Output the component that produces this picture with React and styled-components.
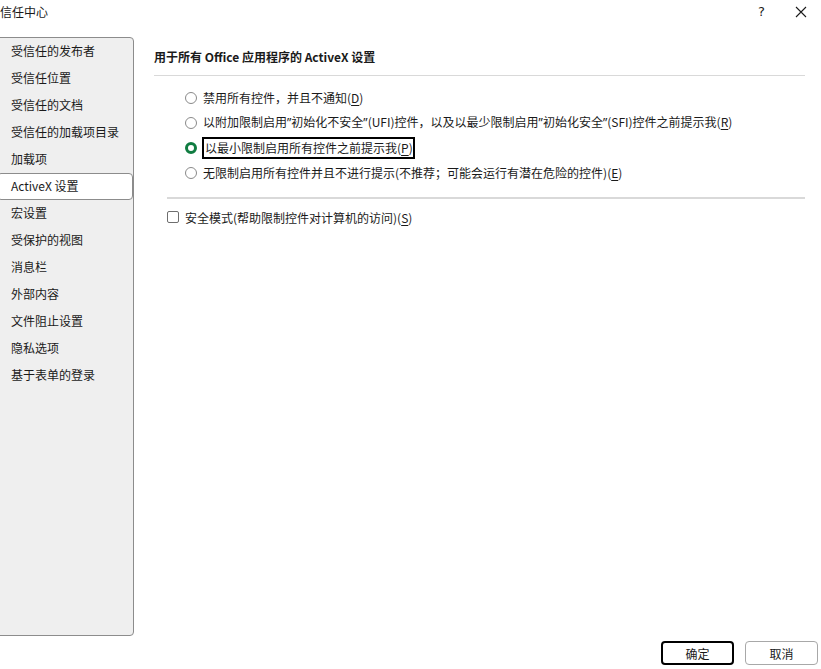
import React from 'react';
import styled, { createGlobalStyle } from 'styled-components';

const Global = createGlobalStyle`
  body {
    margin: 0;
    background: #ffffff;
    font-family: "Microsoft YaHei UI", "Noto Sans CJK SC", "Noto Sans", sans-serif;
    font-size: 12px;
    color: #1a1a1a;
  }
`;

const Dialog = styled.div`
  width: 821px;
  height: 669px;
  display: flex;
  flex-direction: column;
  overflow: hidden;
  background: #ffffff;
`;

const TitleBar = styled.div`
  height: 37px;
  display: flex;
  align-items: flex-start;
  justify-content: space-between;
`;

const Title = styled.div`
  padding: 4px 0 0 0;
  line-height: 16px;
  font-size: 12px;
`;

const TitleButtons = styled.div`
  display: flex;
  align-items: center;
  gap: 30px;
  padding: 4px 14px 0 0;
`;

const Help = styled.span`
  font-family: "Segoe UI", "DejaVu Sans", sans-serif;
  font-size: 13px;
  line-height: 16px;
`;

const Body = styled.div`
  flex: 1;
  display: flex;
  min-height: 0;
`;

const Sidebar = styled.div`
  width: 138px;
  margin-left: -4px;
  background: #efefef;
  border: 1px solid #8c8c8c;
  border-radius: 4px;
  box-sizing: border-box;
  display: flex;
  flex-direction: column;
`;

const NavItem = styled.div`
  height: 27px;
  line-height: 23px;
  padding-left: 13px;
  box-sizing: border-box;
  border: 1px solid ${p => (p.active ? '#8c8c8c' : 'transparent')};
  border-radius: 4px;
  background: ${p => (p.active ? '#ffffff' : 'transparent')};
  white-space: nowrap;
`;

const Main = styled.div`
  flex: 1;
  padding: 12px 16px 0 20px;
  display: flex;
  flex-direction: column;
`;

const Heading = styled.div`
  font-weight: bold;
  line-height: 16px;
  padding-bottom: 10px;
  border-bottom: 1px solid #d9d9d9;
`;

const RadioGroup = styled.div`
  display: flex;
  flex-direction: column;
  padding: 9px 0 12px 31px;
`;

const Option = styled.label`
  display: flex;
  align-items: center;
  height: 25px;
  white-space: nowrap;
`;

const RadioDot = styled.span`
  width: 12px;
  height: 12px;
  box-sizing: border-box;
  border-radius: 50%;
  border: ${p => (p.checked ? '3px solid #107c41' : '1px solid #8a8a8a')};
  background: #ffffff;
  margin-right: ${p => (p.checked ? '5px' : '6px')};
  flex-shrink: 0;
`;

const OptionText = styled.span`
  line-height: 16px;
  padding: ${p => (p.focused ? '1px 2px 1px 1px' : '0')};
  border: ${p => (p.focused ? '2px solid #000000' : 'none')};
  width: ${p => (p.focused ? '206px' : 'auto')};
`;

const Quote = styled.span`
  font-family: "Noto Sans", "DejaVu Sans", sans-serif;
`;

const Key = styled.u`
  text-underline-offset: 2px;
`;

const Divider = styled.div`
  margin-left: 13px;
  border-top: 2px solid #d9d9d9;
`;

const CheckRow = styled.label`
  display: flex;
  align-items: center;
  height: 20px;
  margin: 8px 0 0 13px;
`;

const CheckBox = styled.span`
  width: 12px;
  height: 12px;
  box-sizing: border-box;
  border: 1px solid #6e6e6e;
  border-radius: 2px;
  background: #ffffff;
  margin-right: 6px;
`;

const Footer = styled.div`
  height: 33px;
  display: flex;
  justify-content: flex-end;
  align-items: flex-start;
  gap: 11px;
  padding: 5px 3px 0 0;
  box-sizing: border-box;
`;

const Button = styled.button`
  width: 73px;
  height: 24px;
  box-sizing: border-box;
  background: #ffffff;
  border: ${p => (p.primary ? '2px solid #000000' : '1px solid #a8a8a8')};
  border-radius: 4px;
  font-family: inherit;
  font-size: 12px;
  color: #1a1a1a;
  padding: 0;
`;

const navItems = [
  '受信任的发布者',
  '受信任位置',
  '受信任的文档',
  '受信任的加载项目录',
  '加载项',
  'ActiveX 设置',
  '宏设置',
  '受保护的视图',
  '消息栏',
  '外部内容',
  '文件阻止设置',
  '隐私选项',
  '基于表单的登录',
];

const Q = () => <Quote>”</Quote>;

const options = [
  { text: <>禁用所有控件，并且不通知</>, key: 'D' },
  {
    text: <>以附加限制启用<Q />初始化不安全<Q />(UFI)控件，以及以最少限制启用<Q />初始化安全<Q />(SFI)控件之前提示我</>,
    key: 'R',
  },
  { text: <>以最小限制启用所有控件之前提示我</>, key: 'P', checked: true },
  { text: <>无限制启用所有控件并且不进行提示(不推荐；可能会运行有潜在危险的控件)</>, key: 'E' },
];

export default function App() {
  return (
    <Dialog>
      <Global />
      <TitleBar>
        <Title>信任中心</Title>
        <TitleButtons>
          <Help>?</Help>
          <svg width="12" height="12" viewBox="0 0 12 12">
            <path d="M1 1 L11 11 M11 1 L1 11" stroke="#1a1a1a" strokeWidth="1.1" fill="none" />
          </svg>
        </TitleButtons>
      </TitleBar>
      <Body>
        <Sidebar>
          {navItems.map(item => (
            <NavItem key={item} active={item === 'ActiveX 设置'}>{item}</NavItem>
          ))}
        </Sidebar>
        <Main>
          <Heading>用于所有 Office 应用程序的 ActiveX 设置</Heading>
          <RadioGroup>
            {options.map(o => (
              <Option key={o.key}>
                <RadioDot checked={o.checked} />
                <OptionText focused={o.checked}>
                  {o.text}(<Key>{o.key}</Key>)
                </OptionText>
              </Option>
            ))}
          </RadioGroup>
          <Divider />
          <CheckRow>
            <CheckBox />
            安全模式(帮助限制控件对计算机的访问)(<Key>S</Key>)
          </CheckRow>
        </Main>
      </Body>
      <Footer>
        <Button primary>确定</Button>
        <Button>取消</Button>
      </Footer>
    </Dialog>
  );
}
